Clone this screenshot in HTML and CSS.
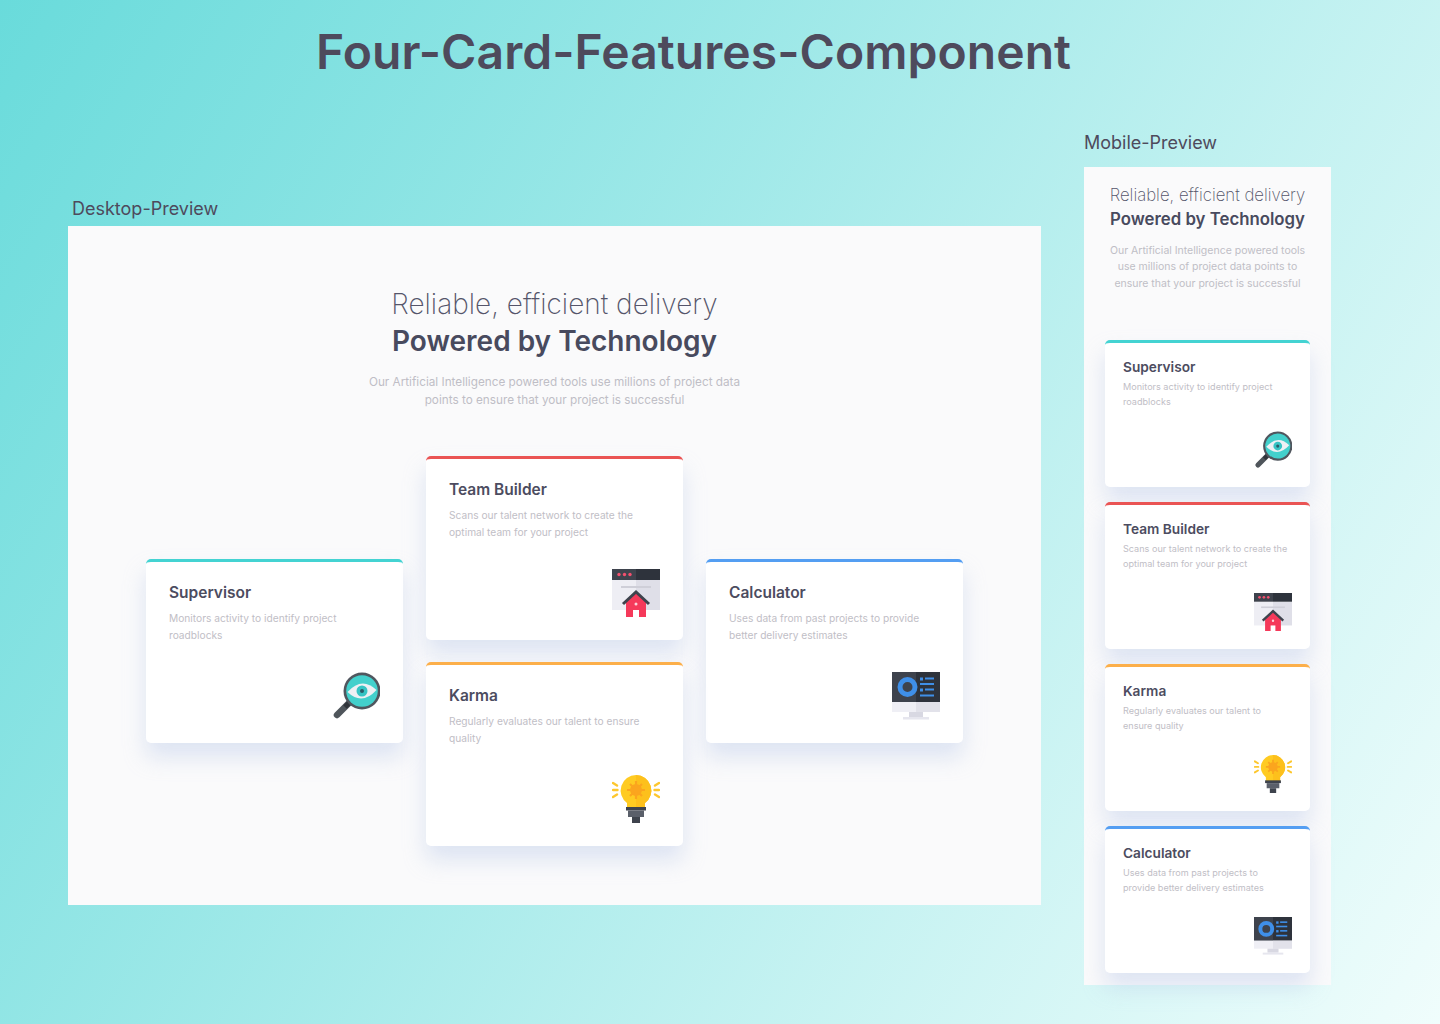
FILE: index.html

```html
<!DOCTYPE html>
<html lang="en">
<head>
  <meta charset="UTF-8">
  <title>Four-Card-Features-Component</title>
  <link rel="stylesheet" href="styles.css">
</head>
<body>
  <svg class="icon-defs" width="0" height="0">
    <symbol id="icon-supervisor" viewBox="0 0 48 48">
      <path d="M17 31 L5 43" stroke="#4f555b" stroke-width="6.5" stroke-linecap="round"/>
      <path d="M19 29 L13 35" stroke="#30343a" stroke-width="5"/>
      <circle cx="30" cy="19" r="18.5" fill="#50565e"/>
      <circle cx="30" cy="19" r="15.8" fill="#43d0cc"/>
      <path d="M15.5 20 Q30 4 44.5 18 Q30 34 15.5 20 Z" fill="#eef0f4"/>
      <circle cx="30" cy="19" r="5.5" fill="#36c4c4"/>
      <circle cx="30" cy="19" r="2" fill="#2c5a68"/>
    </symbol>
    <symbol id="icon-team" viewBox="0 0 48 48">
      <rect x="0" y="11" width="24" height="30" fill="#eeeef4"/>
      <rect x="24" y="11" width="24" height="30" fill="#dfdfe8"/>
      <rect x="0" y="0" width="24" height="11" fill="#3e434d"/>
      <rect x="24" y="0" width="24" height="11" fill="#2e333c"/>
      <circle cx="7" cy="5.5" r="1.7" fill="#f2506e"/>
      <circle cx="12.5" cy="5.5" r="1.7" fill="#f2506e"/>
      <circle cx="18" cy="5.5" r="1.7" fill="#f2506e"/>
      <rect x="9" y="17" width="30" height="2" fill="#cfcfd8"/>
      <path d="M14 33 L24 24 L34 33 V48 H14 Z" fill="#f5395a"/>
      <path d="M11 35 L24 23 L37 35" fill="none" stroke="#3e434d" stroke-width="3"/>
      <circle cx="24" cy="35" r="1.5" fill="#fbd3da"/>
      <rect x="21" y="41" width="6" height="7" fill="#fff"/>
    </symbol>
    <symbol id="icon-karma" viewBox="0 0 48 48">
      <g stroke="#fdc72e" stroke-width="2.4" stroke-linecap="round">
        <path d="M1 8 L5 10.5"/>
        <path d="M1 15 H5.5"/>
        <path d="M1 22 L5 19.5"/>
        <path d="M47 8 L43 10.5"/>
        <path d="M47 15 H42.5"/>
        <path d="M47 22 L43 19.5"/>
      </g>
      <path d="M24 0 A15.5 15.5 0 0 1 33 28 V33 H15 V28 A15.5 15.5 0 0 1 24 0 Z" fill="#ffcb22"/>
      <path d="M24 0 A15.5 15.5 0 0 1 33 28 V33 H24 Z" fill="#fdc01c"/>
      <circle cx="24" cy="15" r="6" fill="#fba51e"/>
      <path d="M24 6 V24 M15 15 H33 M18 9 L30 21 M30 9 L18 21" stroke="#fba51e" stroke-width="2.2"/>
      <rect x="14" y="32" width="20" height="3.5" fill="#3e434d"/>
      <rect x="16" y="35.5" width="16" height="6.5" fill="#5a5f6a"/>
      <rect x="20" y="42" width="8" height="6" fill="#3e434d"/>
    </symbol>
    <symbol id="icon-calculator" viewBox="0 0 48 48">
      <rect x="0" y="0" width="24" height="30" fill="#3e434d"/>
      <rect x="24" y="0" width="24" height="30" fill="#2e333c"/>
      <rect x="0" y="30" width="48" height="10" fill="#efeff5"/>
      <rect x="24" y="30" width="24" height="10" fill="#e2e2ea"/>
      <rect x="17" y="40" width="14" height="5" fill="#d8d8e2"/>
      <rect x="11" y="45" width="26" height="2.5" fill="#e6e6ee"/>
      <circle cx="15.5" cy="15" r="7.5" fill="none" stroke="#3f8fe8" stroke-width="5"/>
      <g fill="#3f8fe8">
        <rect x="28" y="5.5" width="3" height="3"/>
        <rect x="33" y="5.5" width="9" height="2"/>
        <rect x="28" y="11" width="14" height="2"/>
        <rect x="28" y="16.5" width="3" height="3"/>
        <rect x="33" y="16.5" width="9" height="2"/>
        <rect x="28" y="22.5" width="14" height="2"/>
      </g>
    </symbol>
  </svg>

  <h1 class="page-title">Four-Card-Features-Component</h1>

  <main class="previews">
    <section class="preview preview-desktop">
      <h2 class="preview-label">Desktop-Preview</h2>
      <div class="sheet">
        <header class="intro">
          <p class="intro-light">Reliable, efficient delivery</p>
          <p class="intro-bold">Powered by Technology</p>
          <p class="intro-text">Our Artificial Intelligence powered tools use millions of project data points to ensure that your project is successful</p>
        </header>
        <div class="cards">
          <article class="card card-teal card-side">
            <h3>Supervisor</h3>
            <p>Monitors activity to identify project roadblocks</p>
            <svg class="card-icon"><use href="#icon-supervisor"/></svg>
          </article>
          <article class="card card-red">
            <h3>Team Builder</h3>
            <p>Scans our talent network to create the optimal team for your project</p>
            <svg class="card-icon"><use href="#icon-team"/></svg>
          </article>
          <article class="card card-blue card-side">
            <h3>Calculator</h3>
            <p>Uses data from past projects to provide better delivery estimates</p>
            <svg class="card-icon"><use href="#icon-calculator"/></svg>
          </article>
          <article class="card card-orange card-middle">
            <h3>Karma</h3>
            <p>Regularly evaluates our talent to ensure quality</p>
            <svg class="card-icon"><use href="#icon-karma"/></svg>
          </article>
        </div>
      </div>
    </section>

    <section class="preview preview-mobile">
      <h2 class="preview-label">Mobile-Preview</h2>
      <div class="sheet">
        <header class="intro">
          <p class="intro-light">Reliable, efficient delivery</p>
          <p class="intro-bold">Powered by Technology</p>
          <p class="intro-text">Our Artificial Intelligence powered tools use millions of project data points to ensure that your project is successful</p>
        </header>
        <div class="cards">
          <article class="card card-teal">
            <h3>Supervisor</h3>
            <p>Monitors activity to identify project roadblocks</p>
            <svg class="card-icon"><use href="#icon-supervisor"/></svg>
          </article>
          <article class="card card-red">
            <h3>Team Builder</h3>
            <p>Scans our talent network to create the optimal team for your project</p>
            <svg class="card-icon"><use href="#icon-team"/></svg>
          </article>
          <article class="card card-orange">
            <h3>Karma</h3>
            <p>Regularly evaluates our talent to ensure quality</p>
            <svg class="card-icon"><use href="#icon-karma"/></svg>
          </article>
          <article class="card card-blue">
            <h3>Calculator</h3>
            <p>Uses data from past projects to provide better delivery estimates</p>
            <svg class="card-icon"><use href="#icon-calculator"/></svg>
          </article>
        </div>
      </div>
    </section>
  </main>
</body>
</html>
```

FILE: styles.css

```css
* { box-sizing: border-box; }
html, body { height: 100%; }
body {
  margin: 0; height: 1024px; overflow: hidden;
  font-family: Inter, sans-serif;
  background: linear-gradient(121deg, #69dbdb 0%, #f0fdfc 100%);
}
.icon-defs { position: absolute; }
.page-title {
  margin: 0; padding: 23px 0 0 316px;
  font-size: 48px; line-height: 58px; font-weight: 600; color: #4e4a5c; letter-spacing: 0.05px;
}
.previews { display: flex; align-items: flex-start; padding: 0 0 0 68px; gap: 43px; }
.preview-label { margin: 0; font-size: 18px; line-height: 22px; font-weight: 400; color: #4e4a5c; }
.preview-desktop { width: 973px; margin-top: 115px; }
.preview-desktop .preview-label { padding-left: 4px; height: 30px; padding-top: 2px; }
.preview-mobile { width: 247px; margin-top: 51px; }
.preview-mobile .preview-label { height: 35px; }
.sheet { background: #fafafb; }
.preview-desktop .sheet { height: 679px; padding-top: 62px; }
.preview-mobile .sheet { height: 818px; padding-top: 18px; }

.intro { text-align: center; }
.intro p { margin: 0; font-family: Inter, sans-serif; }
.intro-light { font-weight: 200; color: #55556a; }
.intro-bold { font-weight: 600; color: #484a5e; }
.intro-text { color: #bfbec6; }
.preview-desktop .intro-light { font-size: 28px; line-height: 32px; }
.preview-desktop .intro-bold { font-size: 28px; line-height: 40px; margin-top: 1px; }
.preview-desktop .intro-text { font-size: 11.75px; line-height: 18px; width: 380px; margin: 12px auto 0; }
.preview-mobile .intro-light { font-size: 16.8px; line-height: 20px; }
.preview-mobile .intro-bold { font-size: 16.8px; line-height: 24px; margin-top: 2px; }
.preview-mobile .intro-text { font-size: 10.5px; line-height: 16.4px; width: 210px; margin: 12px auto 0; }

.cards { display: grid; }
.preview-desktop .cards {
  grid-template-columns: repeat(3, 257px); grid-template-rows: 184px 184px;
  column-gap: 23px; row-gap: 22px;
  justify-content: center; align-items: center; margin-top: 47px;
}
.preview-mobile .cards {
  grid-template-columns: 205px; grid-auto-rows: 147px; row-gap: 15px;
  justify-content: center; margin-top: 48px;
}
.card {
  display: flex; flex-direction: column;
  background: #fff; border-top: 3px solid; border-radius: 5px;
  box-shadow: 0 14px 22px rgba(180, 198, 230, 0.42);
  height: 100%;
}
.card-side { grid-row: span 2; height: 184px; }
.card-middle { grid-column: 2; }
.card-teal { border-top-color: #44d3d2; }
.card-red { border-top-color: #ea5454; }
.card-orange { border-top-color: #fcaf4a; }
.card-blue { border-top-color: #549ef2; }
.card h3 { margin: 0; font-weight: 600; color: #4c4c60; }
.card p { margin: 0; color: #bfbec6; }
.card-icon { margin-top: auto; align-self: flex-end; display: block; }
.preview-desktop .card { padding: 21px 23px 23px; }
.preview-desktop .card h3 { font-size: 15.5px; line-height: 20px; }
.preview-desktop .card p { font-size: 10.2px; line-height: 17px; margin-top: 7px; }
.preview-desktop .card-icon { width: 48px; height: 48px; }
.preview-mobile .card { padding: 15px 18px 18px; }
.preview-mobile .card h3 { font-size: 13.7px; line-height: 18px; }
.preview-mobile .card p { font-size: 9.1px; line-height: 15px; margin-top: 3px; padding-right: 2px; }
.preview-mobile .card-icon { width: 38px; height: 38px; }
```
